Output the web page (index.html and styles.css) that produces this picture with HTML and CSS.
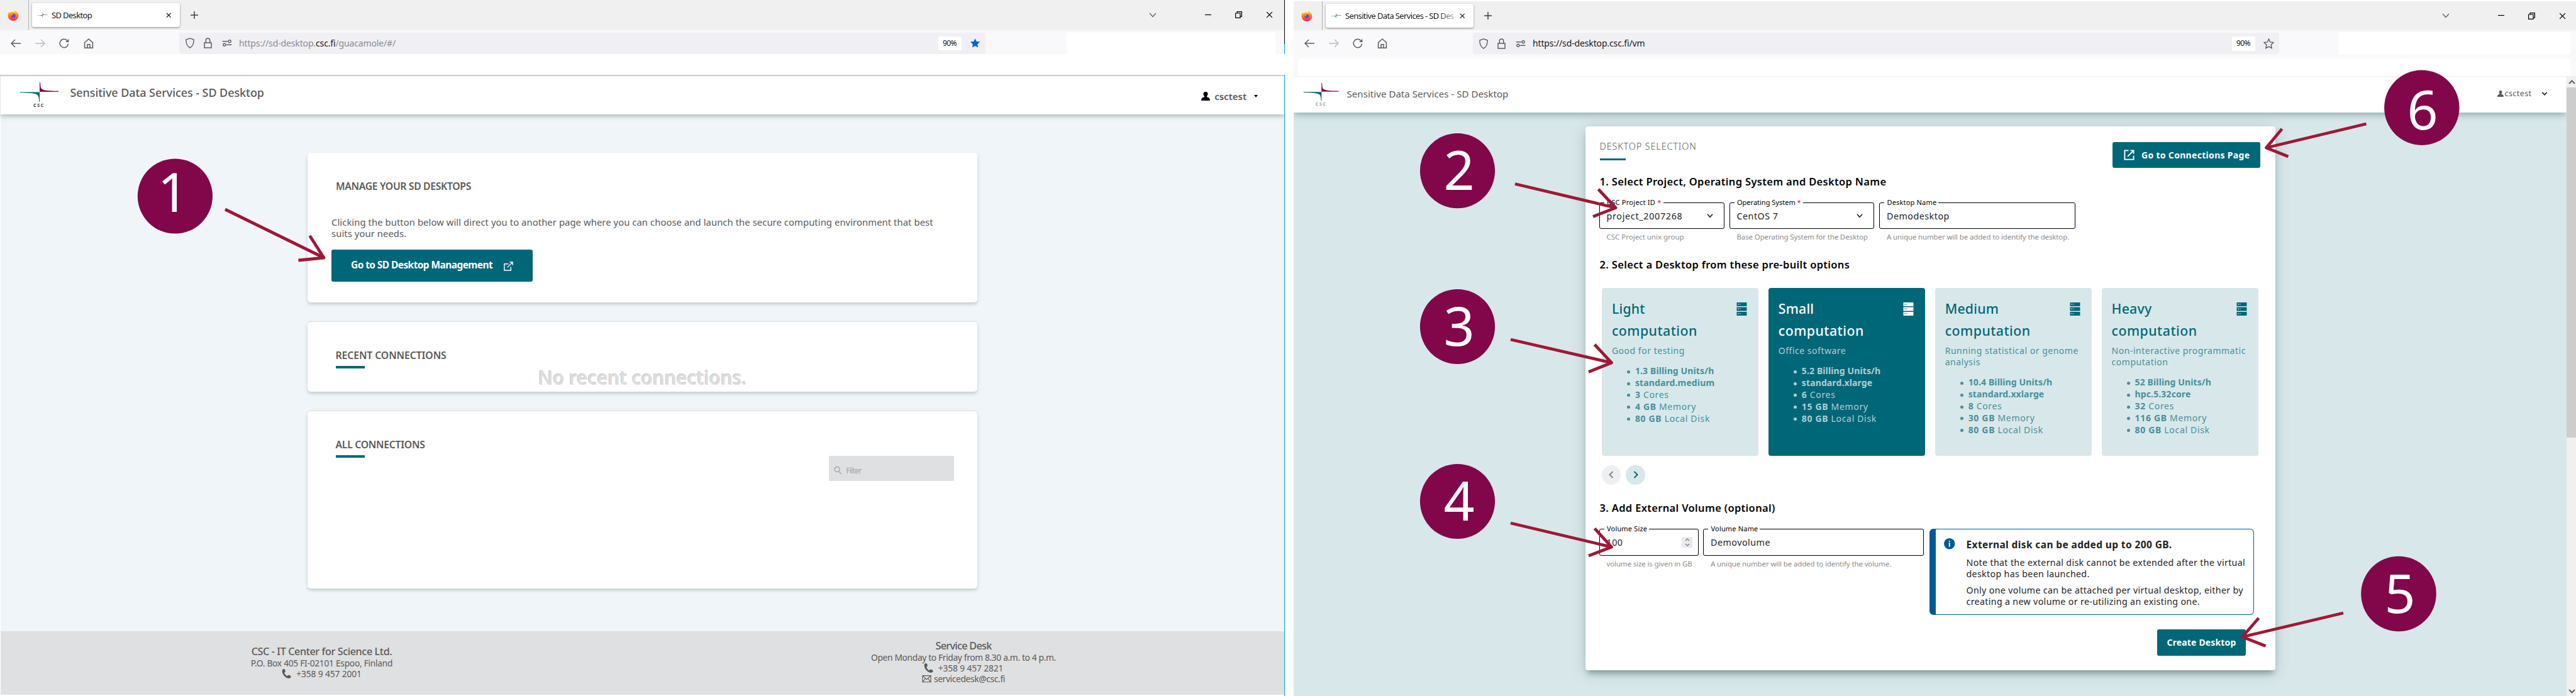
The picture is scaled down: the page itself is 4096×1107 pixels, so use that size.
FILE: index.html
```html
<!DOCTYPE html>
<html lang="en">
<head>
<meta charset="utf-8">
<title>SD Desktop</title>
<link rel="stylesheet" href="styles.css">
</head>
<body>
<svg class="defs" aria-hidden="true">
  <defs>
    <linearGradient id="fox-body" x1="0" y1="0" x2="0" y2="1"><stop offset="0" stop-color="#fff44f"/><stop offset=".4" stop-color="#ff980e"/><stop offset="1" stop-color="#ff1f5e"/></linearGradient>
    <symbol id="fox" viewBox="0 0 18 18"><path d="M12.2.5c.2 1.700 1.600 2.600 3 4.200 1.200 1.300 2.300 2.800 2.300 5A8.500 8.300 0 0 1 .5 9.800C.5 7.500 1.200 5.500 2.600 4l.6 1.400C4.300 4 5.500 3.600 7 3.600c1.800 0 2.600.3 3.600 1.100C10.500 3 11 1.500 12.200.5z" fill="url(#fox-body)"/><circle cx="9" cy="10" r="3.600" fill="#7a3be0"/><path d="M4.500 7c2-.8 4.500-.4 5.200.9-1.500.2-2.500 1-2.500 2.300-1.600-.2-2.900-1.500-2.700-3.200z" fill="#ff8a1a"/></symbol>
    <symbol id="csc" viewBox="0 0 61 31"><path d="M31 0v15h30v-1.200C46 13.300 36 13.500 33.500 9.500 32.300 7.500 32.300 4 32 0z" fill="#82064a"/><path d="M0 15.500v1C15 16.800 25 17 28 20.500c2 2.500 2 6.500 2.200 10.500h.9V15.500z" fill="#006778"/></symbol>
    <symbol id="close" viewBox="0 0 10 10"><path d="M1 1l8 8M9 1l-8 8"/></symbol>
    <symbol id="plus" viewBox="0 0 12 12"><path d="M6 0v12M0 6h12"/></symbol>
    <symbol id="chev" viewBox="0 0 12 8"><path d="M1 1l5 5.500L11 1"/></symbol>
    <symbol id="min" viewBox="0 0 10 10"><path d="M0 4.500h10"/></symbol>
    <symbol id="restore" viewBox="0 0 11 11"><path d="M.6 3h7.400v7.400H.6zM3 3V.7h7.400v7.400H8"/></symbol>
    <symbol id="back" viewBox="0 0 16 16"><path d="M16 8H1M7 2L1 8l6 6"/></symbol>
    <symbol id="fwd" viewBox="0 0 16 16"><path d="M0 8h15M9 2l6 6-6 6"/></symbol>
    <symbol id="reload" viewBox="0 0 16 16"><path d="M14.500 8.500A6.700 6.700 0 1 1 12.500 3.200"/><path d="M15.300.8v5.200h-5.200z" fill="currentColor" stroke="none"/></symbol>
    <symbol id="home" viewBox="0 0 16 16"><path d="M.8 7.500L8 1l7.200 6.500M1.600 7v8.200h12.800V7M6 15V9.800h4V15"/></symbol>
    <symbol id="shield" viewBox="0 0 16 18"><path d="M8 1l6.500 2.300c.3 6-1 10.500-6.500 13.700C2.500 13.800 1.200 9.300 1.500 3.300z"/></symbol>
    <symbol id="lock" viewBox="0 0 13 17"><path d="M1 8h11v8H1zM3.300 8V4.200a3.200 3.200 0 0 1 6.400 0V8"/></symbol>
    <symbol id="sliders" viewBox="0 0 16 12"><path d="M0 3h9M7 9h9"/><circle cx="12.500" cy="3" r="2.200"/><circle cx="3.500" cy="9" r="2.200"/></symbol>
    <symbol id="star" viewBox="0 0 18 18"><path d="M9 1.200l2.400 5.100 5.500.7-4 3.900 1 5.600L9 13.800l-4.900 2.700 1-5.600-4-3.900 5.500-.7z"/></symbol>
    <symbol id="user" viewBox="0 0 14 14"><path d="M7 0a3.500 3.500 0 0 1 3.500 3.600c0 1.400-.7 2.700-1.600 3.400l.1 1.200C11.500 9 14 9.500 14 14H0c0-4.500 2.500-5 5-5.800l.1-1.200C4.200 6.300 3.500 5 3.500 3.600A3.500 3.500 0 0 1 7 0z"/></symbol>
    <symbol id="popout" viewBox="0 0 16 16"><path d="M8 4H1v11h11V9M10 1h5v5M15 1L6 10"/></symbol>
    <symbol id="newtab" viewBox="0 0 18 18"><path d="M8 1.500H1.500v15h15V10M11 1.500h5.500V7M16.500 1.500L6.500 11.500"/></symbol>
    <symbol id="phone" viewBox="0 0 16 16"><path d="M3 0l2.500.8.8 3.700-2 1.800c.8 2.400 2.500 4.300 4.800 5.600l2.200-1.700 3.700 1.300.6 2.600C14 16 11.500 16.300 9.500 15.400 4.800 13.500 1.200 9 .6 4 .5 2.200 1.200.7 3 0z"/></symbol>
    <symbol id="mail" viewBox="0 0 15 12"><path d="M.7.7h13.600v10.600H.7zM.7.7L7.500 7l6.800-6.300M.7 11.300l4.500-5.800M14.300 11.300L9.800 5.500"/></symbol>
    <symbol id="search" viewBox="0 0 12 14"><circle cx="5" cy="5.500" r="4"/><path d="M8 9l3.500 4"/></symbol>
    <symbol id="server" viewBox="0 0 17 21"><path fill-rule="evenodd" d="M.5 0h16v6H.5zM2.500 2v1.500H4V2zM5.500 2v1.500h1V2zM.5 7.500h16v6H.5zM2.500 9.500V11H4V9.500zM5.500 9.500V11h1V9.500zM.5 15h16v6H.5zM2.500 17v1.500H4V17zM5.500 17v1.500h1V17z"/></symbol>
  </defs>
</svg>

<section class="window window-left">
  <div class="tabstrip">
    <div class="brand"><svg class="fox"><use href="#fox"/></svg></div>
    <div class="tab">
      <svg class="favicon"><use href="#csc"/></svg>
      <span class="tab-title">SD Desktop</span>
      <svg class="line tab-close"><use href="#close"/></svg>
    </div>
    <svg class="line plus"><use href="#plus"/></svg>
    <div class="controls">
      <svg class="line c-chev"><use href="#chev"/></svg>
      <svg class="line c-min"><use href="#min"/></svg>
      <svg class="line c-restore"><use href="#restore"/></svg>
      <svg class="line c-close"><use href="#close"/></svg>
    </div>
  </div>
  <div class="toolbar">
    <nav class="nav">
      <svg class="line"><use href="#back"/></svg>
      <svg class="line dim"><use href="#fwd"/></svg>
      <svg class="line"><use href="#reload"/></svg>
      <svg class="line"><use href="#home"/></svg>
    </nav>
    <div class="urlbar">
      <svg class="line i-shield"><use href="#shield"/></svg>
      <svg class="line i-lock"><use href="#lock"/></svg>
      <svg class="line i-sliders"><use href="#sliders"/></svg>
      <span class="url url-dim">https://sd-desktop.<b>csc.fi</b>/guacamole/#/</span>
      <span class="zoom">90%</span>
      <svg class="i-star starred"><use href="#star"/></svg>
    </div>
    <div class="blank"></div>
  </div>
  <div class="bookmarks"></div>
  <header class="header">
    <div class="logo"><svg class="logo-mark"><use href="#csc"/></svg><span class="logo-text">CSC</span></div>
    <h1 class="app-title">Sensitive Data Services - SD Desktop</h1>
    <div class="account"><svg class="account-icon"><use href="#user"/></svg><span class="account-name">csctest</span><i class="caret"></i></div>
  </header>
  <main class="page">
    <section class="panel panel-manage">
      <h2 class="panel-title">MANAGE YOUR SD DESKTOPS</h2>
      <p class="intro">Clicking the button below will direct you to another page where you can choose and launch the secure computing environment that best<br>suits your needs.</p>
      <a class="button button-manage"><span>Go to SD Desktop Management</span><svg class="line popout"><use href="#popout"/></svg></a>
    </section>
    <section class="panel panel-recent">
      <h2 class="panel-title ruled">RECENT CONNECTIONS</h2>
      <p class="empty">No recent connections.</p>
    </section>
    <section class="panel panel-all">
      <h2 class="panel-title ruled">ALL CONNECTIONS</h2>
      <div class="filter"><svg class="line search"><use href="#search"/></svg><span>Filter</span></div>
    </section>
  </main>
  <footer class="footer">
    <div class="foot foot-org">
      <div class="foot-title">CSC - IT Center for Science Ltd.</div>
      <div class="foot-line">P.O. Box 405 FI-02101 Espoo, Finland</div>
      <div class="foot-line foot-phone"><svg class="phone"><use href="#phone"/></svg><span>+358 9 457 2001</span></div>
    </div>
    <div class="foot foot-desk">
      <div class="foot-title">Service Desk</div>
      <div class="foot-line">Open Monday to Friday from 8.30 a.m. to 4 p.m.</div>
      <div class="foot-line foot-phone"><svg class="phone"><use href="#phone"/></svg><span>+358 9 457 2821</span></div>
      <div class="foot-line"><svg class="line mail"><use href="#mail"/></svg><span>servicedesk@csc.fi</span></div>
    </div>
  </footer>
</section>

<div class="edge"></div>

<section class="window window-right">
  <div class="tabstrip">
    <div class="brand"><svg class="fox"><use href="#fox"/></svg></div>
    <div class="tab">
      <svg class="favicon"><use href="#csc"/></svg>
      <span class="tab-title tab-title-long">Sensitive Data Services - SD Des</span>
      <svg class="line tab-close"><use href="#close"/></svg>
    </div>
    <svg class="line plus"><use href="#plus"/></svg>
    <div class="controls">
      <svg class="line c-chev"><use href="#chev"/></svg>
      <svg class="line c-min"><use href="#min"/></svg>
      <svg class="line c-restore"><use href="#restore"/></svg>
      <svg class="line c-close"><use href="#close"/></svg>
    </div>
  </div>
  <div class="toolbar">
    <nav class="nav">
      <svg class="line"><use href="#back"/></svg>
      <svg class="line dim"><use href="#fwd"/></svg>
      <svg class="line"><use href="#reload"/></svg>
      <svg class="line"><use href="#home"/></svg>
    </nav>
    <div class="urlbar">
      <svg class="line i-shield"><use href="#shield"/></svg>
      <svg class="line i-lock"><use href="#lock"/></svg>
      <svg class="line i-sliders"><use href="#sliders"/></svg>
      <span class="url">https://sd-desktop.csc.fi/vm</span>
      <span class="zoom">90%</span>
      <svg class="line i-star"><use href="#star"/></svg>
    </div>
    <div class="blank"></div>
  </div>
  <div class="bookmarks"></div>
  <div class="viewport">
    <div class="content">
      <header class="header">
        <div class="logo"><svg class="logo-mark"><use href="#csc"/></svg><span class="logo-text">CSC</span></div>
        <h1 class="app-title">Sensitive Data Services - SD Desktop</h1>
        <div class="account"><svg class="account-icon"><use href="#user"/></svg><span class="account-name">csctest</span><svg class="line account-chev"><use href="#chev"/></svg></div>
      </header>
      <main class="page">
        <section class="card">
          <div class="card-head">
            <h2 class="card-title">DESKTOP SELECTION</h2>
            <a class="button button-connections"><svg class="line newtab"><use href="#newtab"/></svg><span>Go to Connections Page</span></a>
          </div>
          <h3 class="step step-project">1. Select Project, Operating System and Desktop Name</h3>
          <div class="fields">
            <div class="field f-project">
              <div class="box"><label>CSC Project ID <em>*</em></label><span class="value">project_2007268</span><svg class="line select"><use href="#chev"/></svg></div>
              <div class="hint">CSC Project unix group</div>
            </div>
            <div class="field f-os">
              <div class="box"><label>Operating System <em>*</em></label><span class="value">CentOS 7</span><svg class="line select"><use href="#chev"/></svg></div>
              <div class="hint">Base Operating System for the Desktop</div>
            </div>
            <div class="field f-name">
              <div class="box"><label>Desktop Name</label><span class="value">Demodesktop</span></div>
              <div class="hint">A unique number will be added to identify the desktop.</div>
            </div>
          </div>
          <h3 class="step step-desktop">2. Select a Desktop from these pre-built options</h3>
          <div class="flavors">
            <article class="flavor">
              <div class="flavor-head"><h4><span>Light</span><br>computation</h4><svg class="server"><use href="#server"/></svg></div>
              <p>Good for testing</p>
              <ul>
                <li><b>1.3 Billing Units/h</b></li>
                <li><b>standard.medium</b></li>
                <li><span><b>3</b> Cores</span></li>
                <li><span><b>4 GB</b> Memory</span></li>
                <li><span><b>80 GB</b> Local Disk</span></li>
              </ul>
            </article>
            <article class="flavor selected">
              <div class="flavor-head"><h4><span>Small</span><br>computation</h4><svg class="server"><use href="#server"/></svg></div>
              <p>Office software</p>
              <ul>
                <li><b>5.2 Billing Units/h</b></li>
                <li><b>standard.xlarge</b></li>
                <li><span><b>6</b> Cores</span></li>
                <li><span><b>15 GB</b> Memory</span></li>
                <li><span><b>80 GB</b> Local Disk</span></li>
              </ul>
            </article>
            <article class="flavor">
              <div class="flavor-head"><h4><span>Medium</span><br>computation</h4><svg class="server"><use href="#server"/></svg></div>
              <p>Running statistical or genome<br>analysis</p>
              <ul>
                <li><b>10.4 Billing Units/h</b></li>
                <li><b>standard.xxlarge</b></li>
                <li><span><b>8</b> Cores</span></li>
                <li><span><b>30 GB</b> Memory</span></li>
                <li><span><b>80 GB</b> Local Disk</span></li>
              </ul>
            </article>
            <article class="flavor">
              <div class="flavor-head"><h4><span>Heavy</span><br>computation</h4><svg class="server"><use href="#server"/></svg></div>
              <p>Non-interactive programmatic<br>computation</p>
              <ul>
                <li><b>52 Billing Units/h</b></li>
                <li><b>hpc.5.32core</b></li>
                <li><span><b>32</b> Cores</span></li>
                <li><span><b>116 GB</b> Memory</span></li>
                <li><span><b>80 GB</b> Local Disk</span></li>
              </ul>
            </article>
          </div>
          <div class="pager">
            <span class="page-dot off"><svg class="line"><path d="M6.500 1L1.500 6l5 5"/></svg></span>
            <span class="page-dot"><svg class="line"><path d="M1.500 1l5 5-5 5"/></svg></span>
          </div>
          <h3 class="step step-volume">3. Add External Volume (optional)</h3>
          <div class="fields volume">
            <div class="field f-size">
              <div class="box"><label>Volume Size</label><span class="value">100</span><span class="spinner"><svg class="line"><path d="M1 4l3-3 3 3M1 9l3 3 3-3"/></svg></span></div>
              <div class="hint">volume size is given in GB</div>
            </div>
            <div class="field f-volume">
              <div class="box"><label>Volume Name</label><span class="value">Demovolume</span></div>
              <div class="hint">A unique number will be added to identify the volume.</div>
            </div>
            <aside class="alert">
              <svg class="info" viewBox="0 0 18 18"><circle cx="9" cy="9" r="9"/><path d="M8 4h2v2H8zM8 7.500h2V14H8z" fill="#fff"/></svg>
              <div>
                <h4>External disk can be added up to 200 GB.</h4>
                <p>Note that the external disk cannot be extended after the virtual<br>desktop has been launched.</p>
                <p>Only one volume can be attached per virtual desktop, either by<br>creating a new volume or re-utilizing an existing one.</p>
              </div>
            </aside>
          </div>
          <a class="button button-create">Create Desktop</a>
        </section>
      </main>
    </div>
    <div class="scrollbar">
      <svg class="line up"><path d="M1 6l4.500-4.500L10 6"/></svg>
      <div class="thumb"></div>
      <svg class="line down"><path d="M1 1l4.500 4.500L10 1"/></svg>
    </div>
  </div>
</section>

<svg class="callouts" viewBox="0 0 4096 1107">
  <g class="arrows">
    <path d="M358 333L515 410M492.500 375L515 410L474.500 414"/>
    <path d="M2409 292.500L2569 330.500M2541.500 301L2569 330.500L2533 344.500"/>
    <path d="M2402 540L2562.500 577M2535.500 548L2562.500 577L2526 591.500"/>
    <path d="M2402 832L2562.500 870M2535.500 840.500L2562.500 870L2526 884"/>
    <path d="M3726 975L3565.500 1013M3591.500 983L3565.500 1013L3602.500 1027.500"/>
    <path d="M3762.500 197L3603.500 235M3628.500 205L3603.500 235L3638.500 249"/>
  </g>
  <g class="dots">
    <circle cx="278.400" cy="312" r="59.600"/><circle cx="2317.500" cy="271.600" r="59.600"/><circle cx="2317.500" cy="519.500" r="59.600"/><circle cx="2317.500" cy="797.500" r="59.600"/><circle cx="3814" cy="944.500" r="59.800"/><circle cx="3850.800" cy="171.200" r="59.700"/>
  </g>
  <g class="numbers">
    <text x="275" y="337">1</text><text x="2320" y="302">2</text><text x="2320" y="550">3</text><text x="2320" y="828">4</text><text x="3816" y="975">5</text><text x="3852" y="206">6</text>
  </g>
</svg>
</body>
</html>
```
FILE: styles.css
```css
* { box-sizing: border-box; }
html, body { margin: 0; }
body { position: relative; display: flex; width: 4096px; height: 1107px; overflow: hidden; background: #fff; color: #595959; font-family: "Noto Sans", sans-serif; white-space: nowrap; }
h1, h2, h3, h4, p, ul { margin: 0; padding: 0; font-weight: 400; }
ul { list-style: none; }
svg { display: block; flex: none; overflow: visible; fill: currentColor; }
.line { fill: none; stroke: currentColor; stroke-width: 1.5; }
.defs { position: absolute; width: 0; height: 0; }

.window { display: flex; flex-direction: column; flex: none; height: 1107px; }
.window-left { width: 2042px; }
.edge { flex: none; width: 1px; margin-right: 14px; background: linear-gradient(#000 70px, #00a0f0 70px 86px, #fff 86px 119px, #00a0f0 119px); }
.window-right { width: 2039px; padding-top: 2px; }

/* Browser chrome */
.tabstrip { display: flex; align-items: center; height: 47.500px; background: #f0f0f0; color: #3c3c44; }
.window-right .tabstrip { height: 46.300px; }
.brand { display: flex; align-items: center; width: 46px; height: 100%; padding-left: 12px; border-right: 1px solid #b0b0b0; }
.fox { width: 18px; height: 18px; }
.tab { display: flex; align-items: center; width: 235px; height: 38.500px; margin-left: 4.500px; padding: 0 13px 0 8px; border-radius: 3px; background: #fff; box-shadow: 0 1px 3px rgba(0,0,0,.45); color: #15141a; }
.favicon { width: 17px; height: 12px; }
.tab-title { margin-left: 6.500px; font-size: 13px; letter-spacing: -.050em; line-height: 20px; }
.tab-title-long { width: 177px; -webkit-mask-image: linear-gradient(90deg, #000 148px, rgba(0,0,0,.2) 177px); mask-image: linear-gradient(90deg, #000 148px, rgba(0,0,0,.2) 177px); }
.tab-close { width: 8.500px; height: 8.500px; margin-left: auto; }
.plus { width: 12px; height: 12px; margin-left: 17.500px; }
.controls { display: flex; align-items: center; margin-left: auto; padding-right: 18px; color: #000; }
.window-right .controls { padding-right: 16px; }
.controls .line { stroke-width: 1.2; }
.controls .c-chev { width: 12px; height: 8px; margin-right: 77px; color: #5b5b66; }
.c-min { width: 10px; height: 10px; margin-right: 38px; }
.c-restore { width: 11px; height: 11px; margin-right: 38px; }
.c-close { width: 11px; height: 11px; }
.toolbar { display: flex; align-items: center; height: 38.300px; background: #f9f9fb; color: #5b5b66; }
.window-right .toolbar { height: 38px; }
.nav { display: flex; gap: 22.500px; width: 284.500px; padding: 4px 0 0 17px; }
.nav svg { width: 16px; height: 16px; }
.nav .dim { color: #b9b9c0; }
.urlbar { display: flex; align-items: center; align-self: flex-end; width: 1282px; height: 34px; padding: 0 8px 0 9px; border-radius: 3px; background: #f0f0f4; }
.i-shield { width: 16px; height: 17px; }
.i-lock { width: 13px; height: 17px; margin-left: 14.500px; }
.i-sliders { width: 16px; height: 11px; margin-left: 16px; }
.url { margin-left: 11px; color: #15141a; font-size: 14px; letter-spacing: -.010em; line-height: 20px; }
.url-dim { color: #8a8a92; }
.url b { color: #15141a; font-weight: 400; }
.zoom { width: 37px; margin-left: auto; border-radius: 3px; background: #fff; color: #15141a; font-size: 12px; letter-spacing: -.600px; line-height: 22.500px; text-align: center; }
.i-star { width: 17px; height: 17px; margin-left: 13px; }
.starred { color: #0061e0; }
.blank { align-self: flex-end; width: 332px; height: 34px; margin-left: 129.500px; background: #fff; }
.window-right .blank { width: 369px; height: 35px; margin-left: 94px; }
.bookmarks { height: 35.500px; border-bottom: 2px solid #ccc; background: #fff; }
.window-right .bookmarks { height: 35px; border: solid #f9f9fb; border-width: 7px 9px 0 7px; box-shadow: 0 1.500px #c8c8ca; }

/* App header */
.header { position: relative; z-index: 1; display: flex; height: 61px; border-left: 1px solid #e4e8ea; background: #fff; box-shadow: 0 2px 8px rgba(0,40,40,.35); clip-path: inset(0 0 -20px 0); }
.logo { width: 61px; margin: 10px 0 0 30.500px; }
.logo-mark { width: 61px; height: 31px; }
.logo-text { display: block; margin-top: 1.500px; color: #333; font-size: 7px; font-weight: 700; letter-spacing: 1.800px; line-height: 8px; text-align: center; }
.app-title { margin: 13.500px 0 0 19px; font-size: 18px; font-weight: 500; letter-spacing: -.004em; line-height: 24px; }
.account { display: flex; align-items: center; height: 24px; margin: 20px 42px 0 auto; font-size: 15px; font-weight: 600; line-height: 24px; }
.account-icon { width: 14px; height: 14px; margin-right: 7.500px; color: #000; }
.caret { margin-left: 12px; border: 3px solid transparent; border-top: 4.500px solid #000; border-bottom: 0; }

/* Connections page */
.window-left .page { display: flex; flex-direction: column; flex: none; gap: 30px; height: 821.500px; padding: 61px 488px 0 489px; background: #eff5f8; box-shadow: inset 1px 0 #fff; }
.panel { display: flex; flex-direction: column; align-items: flex-start; padding-left: 44.500px; border-radius: 5px; background: #fff; box-shadow: 0 3px 5px rgba(60,90,90,.25); }
.panel-manage { height: 237.300px; padding: 41px 0 0 38px; }
.panel-recent { height: 112px; border-top: 1px solid #dcdcdc; padding-top: 41px; }
.panel-all { height: 283.500px; border-top: 1px solid #dcdcdc; padding-top: 41px; }
.panel-title { font-size: 15.800px; font-weight: 600; letter-spacing: -.019em; line-height: 24px; }
.panel-manage .panel-title { margin-left: 7px; letter-spacing: -.023em; }
.panel-recent .panel-title { letter-spacing: -.007em; }
.ruled::after { content: ""; display: block; width: 46px; height: 4.300px; margin-top: 5px; background: #006778; }
.intro { margin-top: 36px; font-size: 14.800px; letter-spacing: .005em; line-height: 18px; }
.button { display: flex; align-items: center; border-radius: 3px; background: #006778; color: #fff; font-weight: 700; }
.button-manage { width: 320px; height: 51px; margin-top: 16.500px; padding: 0 31px 3px; font-size: 15.500px; letter-spacing: -.038em; }
.popout { width: 15px; height: 15px; margin: 5px 0 0 auto; }
.empty { align-self: center; margin: -3px 44.500px 0 0; color: #dedede; font-size: 30px; font-weight: 600; letter-spacing: -.009em; line-height: 36px; text-shadow: -1px -1px #c8c8c8; }
.filter { display: flex; align-items: center; align-self: flex-end; width: 199.500px; height: 40.500px; margin: -3px 37px 0 0; padding: 6px 0 0 8px; background: #dfe0e2; color: #a2a3a5; font-size: 12px; letter-spacing: -.062em; }
.search { width: 12px; height: 14px; margin-right: 8px; stroke-width: 1.4; }
.footer { display: grid; grid-template-columns: 1021px 1020px; height: 101px; margin-left: 1px; background: #dfe0e2; }
.foot { display: flex; flex-direction: column; align-items: center; padding-top: 23px; }
.foot-desk { padding-top: 14.500px; }
.foot-title { font-size: 16.200px; font-weight: 500; letter-spacing: -.025em; line-height: 18.700px; }
.foot-desk .foot-title { letter-spacing: -.043em; }
.foot-line { display: flex; align-items: center; height: 17px; font-size: 13.800px; letter-spacing: -.021em; line-height: 17px; }
.foot-desk .foot-line { letter-spacing: -.026em; }
.foot .foot-phone { letter-spacing: -.010em; }
.phone { width: 15px; height: 15px; margin-right: 8px; }
.mail { width: 15px; height: 11.500px; margin-right: 4px; stroke-width: 1.2; }

/* Desktop creation page */
.viewport { display: flex; flex: 1; min-height: 0; }
.content { flex: 1; display: flex; flex-direction: column; }
.window-right .header { height: 57.300px; border: 0; box-shadow: 0 2px 12px rgba(0,50,50,.4); }
.window-right .logo { width: 57.500px; margin: 11px 0 0 15px; }
.window-right .logo-mark { width: 57.500px; height: 28.500px; }
.window-right .logo-text { color: #999; }
.window-right .app-title { margin: 16px 0 0 12px; font-size: 15px; font-weight: 400; letter-spacing: .004em; }
.window-right .account { height: 20px; margin: 18px 30px 0 auto; font-size: 12.500px; font-weight: 400; letter-spacing: .034em; line-height: 20px; }
.window-right .account-icon { width: 10px; height: 10px; margin: 0 1.500px 0 0; color: #595959; }
.account-chev { width: 10px; height: 6px; margin-left: 15px; stroke-width: 2.200; color: #222; }
.window-right .page { flex: 1; padding: 22.700px 0 0 463.500px; background: #d8e7ea; }
.scrollbar { display: flex; flex-direction: column; align-items: center; width: 15.500px; background: #f0f0f0; color: #606060; }
.up { width: 11px; height: 7px; margin: 6px 0 5px 2px; stroke-width: 2; }
.thumb { width: 100%; height: 557px; background: #cdcdcd; }
.down { width: 11px; height: 7px; margin: auto 0 4px 2px; stroke-width: 2; }

.card { display: flex; flex-direction: column; width: 1097px; height: 864.700px; padding: 0 24px 0 23px; border-radius: 4px; background: #fff; box-shadow: 0 8px 9px -3px rgba(0,40,40,.3), 0 4px 24px rgba(0,60,60,.2); }
.card-head { display: flex; justify-content: space-between; align-items: flex-start; height: 76px; }
.card-title { margin-top: 21px; font-size: 14.500px; font-weight: 300; letter-spacing: .057em; line-height: 20px; }
.card-title::after { content: ""; display: block; width: 41.500px; height: 3px; margin-top: 9.500px; background: #006778; }
.button-connections { width: 234.500px; height: 41.500px; margin-top: 24.400px; padding: 0 15px 0 18px; font-size: 14px; letter-spacing: .022em; }
.newtab { width: 17px; height: 17px; margin-right: 11px; stroke-width: 2; }
.step { flex: none; color: #000; font-size: 16.500px; font-weight: 600; letter-spacing: .020em; line-height: 24px; }
.fields { display: flex; gap: 8px; height: 63.500px; margin: 20.600px 0 0 -1px; }
.box { position: relative; display: flex; align-items: center; height: 42.500px; padding: 0 17px 0 11px; border: 1px solid #000; border-top-width: 1.500px; border-radius: 3px; color: #222; }
.box label { position: absolute; left: 7px; top: -8px; padding: 0 3px 0 4.500px; background: #fff; color: #000; font-size: 11px; letter-spacing: .016em; line-height: 14px; }
.f-project label { letter-spacing: .024em; }
.f-os label { letter-spacing: 0; }
.box em { color: #e8112d; font-style: normal; }
.value { margin-top: 1px; font-size: 14.300px; letter-spacing: .034em; line-height: 20px; }
.f-project .value { letter-spacing: .049em; }
.select { width: 10px; height: 6.500px; margin-left: auto; stroke-width: 2; }
.hint { margin-left: 12px; padding-top: 5px; color: #8c8c8c; font-size: 11.500px; letter-spacing: -.011em; line-height: 16px; }
.f-project .hint { letter-spacing: -.001em; }
.f-project { width: 199px; }
.f-os { width: 230.500px; }
.f-name { width: 312px; }
.step-desktop { margin-top: 23.500px; }
.flavors { display: grid; grid-template-columns: repeat(4, 249px); gap: 15.900px; height: 267.200px; margin: 25.300px 0 0 3.400px; }
.flavor { padding: 14.500px 18px 0 16px; border-radius: 4px; background: #d8e8ea; color: #468f9b; }
.flavor-head { display: flex; justify-content: space-between; color: #006778; }
.flavor h4 { font-size: 21.300px; font-weight: 500; letter-spacing: .022em; line-height: 35.700px; }
.flavor h4 span { letter-spacing: .009em; }
.server { width: 17px; height: 21px; margin-top: 8px; }
.flavor p { margin-top: 5px; font-size: 14px; letter-spacing: .037em; line-height: 18.200px; }
.flavor ul { margin: 14px 0 0 24px; font-size: 14px; letter-spacing: .048em; line-height: 18.850px; }
.flavor li { display: flex; align-items: center; }
.flavor li > b { letter-spacing: .009em; }
.flavor li::before { content: ""; width: 5px; height: 5px; margin: 1px 8px 0 0; border-radius: 50%; background: currentColor; }
.selected { background: #006778; color: #b0cfd4; }
.selected .flavor-head { color: #fff; }
.pager { display: flex; gap: 8px; margin: 14.600px 0 0 3.400px; }
.page-dot { display: flex; align-items: center; justify-content: center; width: 30.500px; height: 31px; border-radius: 50%; background: #d8e8ea; color: #006778; }
.page-dot svg { width: 8px; height: 12px; stroke-width: 2; }
.off { background: #eeeff1; color: #858585; }
.step-volume { margin-top: 25.400px; }
.volume { gap: 7px; height: 137px; margin-top: 21px; }
.f-size { width: 158.500px; }
.f-volume { width: 350.500px; }
.f-size .box { padding-right: 9px; }
.spinner { display: grid; place-items: center; width: 17px; height: 17px; margin-left: auto; background: #e9e9ee; color: #858588; }
.spinner svg { width: 8px; height: 13px; }
.alert { display: flex; width: 516px; margin-left: 2.500px; padding: 0 0 0 13px; border: 1px solid #005a96; border-left-width: 10.500px; border-radius: 6px; color: #222; }
.info { width: 17.500px; height: 17.500px; margin: 14px 18px 0 0; color: #005a96; }
.alert h4 { margin-top: 11.500px; font-size: 15.500px; font-weight: 700; letter-spacing: .025em; line-height: 24px; }
.alert p { margin-top: 8px; font-size: 14.200px; letter-spacing: .025em; line-height: 18px; }
.alert h4 + p { margin-top: 8.500px; }
.button-create { justify-content: center; align-self: flex-end; width: 141px; height: 41.600px; margin: 22.700px 22.500px 0 0; font-size: 14px; letter-spacing: .011em; }

/* Numbered callouts */
.callouts { position: absolute; z-index: 2; inset: 0; width: 4096px; height: 1107px; }
.arrows { fill: none; stroke: #9f1835; stroke-width: 4.800; stroke-linejoin: round; }
.dots { fill: #82064a; }
.numbers { fill: #fff; font-size: 86px; text-anchor: middle; }
```
